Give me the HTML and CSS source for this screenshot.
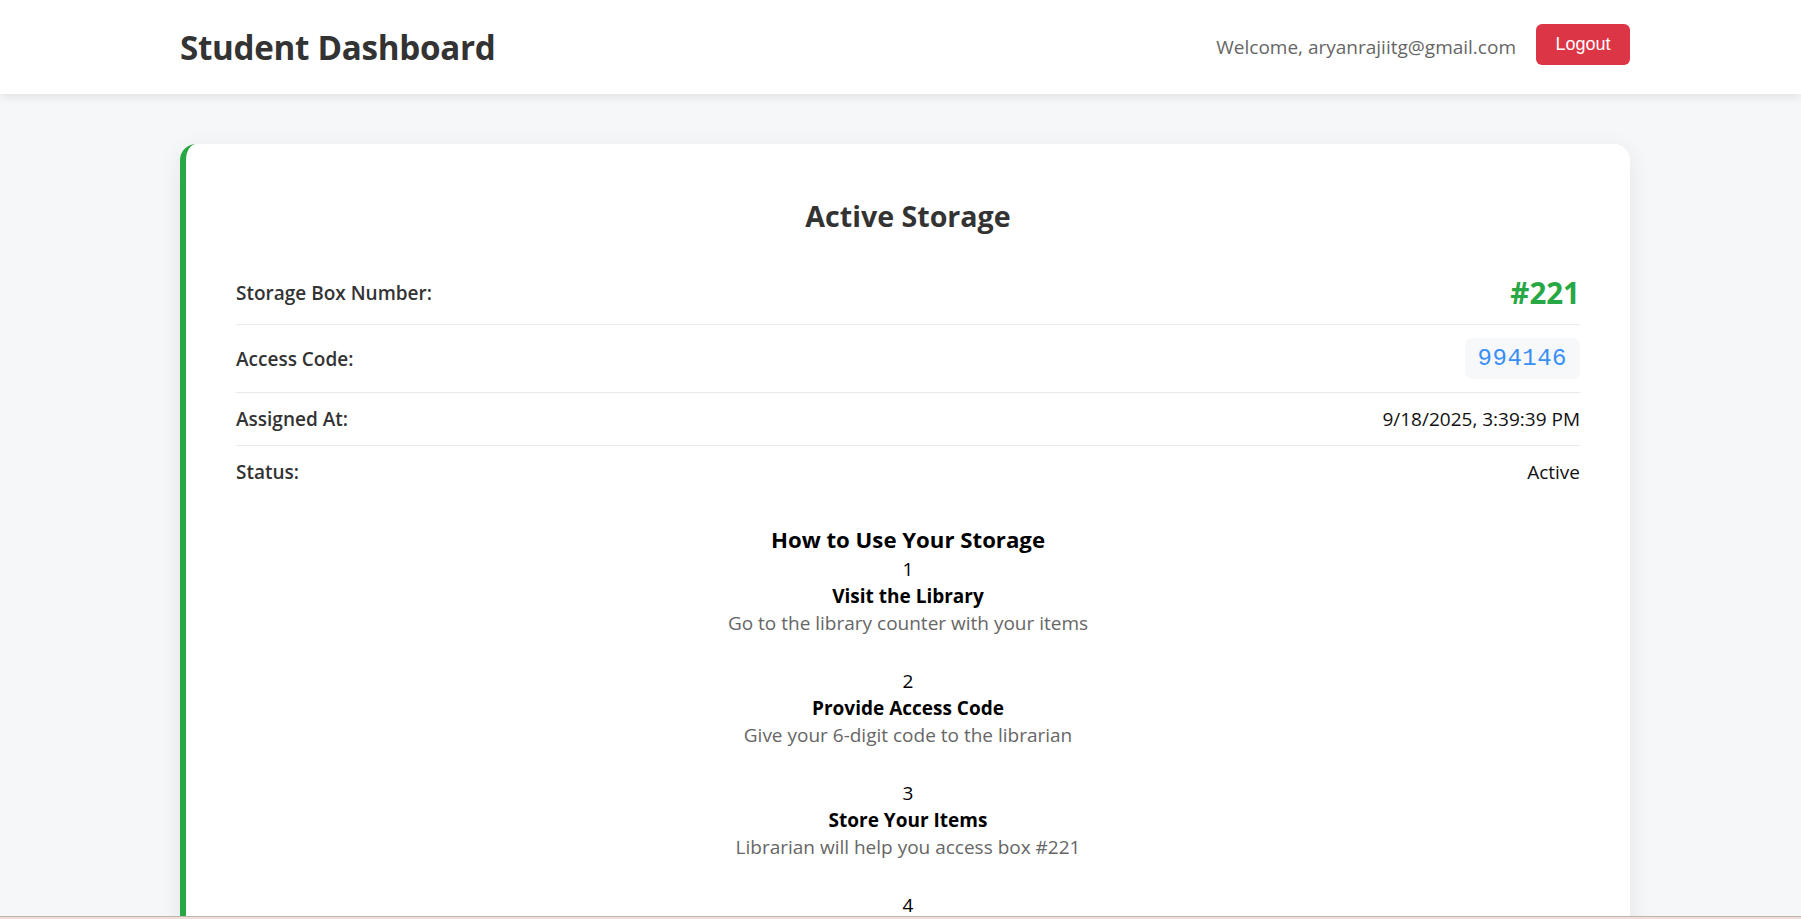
FILE: index.html
```html
<!DOCTYPE html>
<html lang="en">
<head>
<meta charset="utf-8">
<title>Student Dashboard</title>
<link rel="stylesheet" href="styles.css">
</head>
<body>
<header class="topbar">
  <div class="wrap topbar-inner">
    <h1 class="brand">Student Dashboard</h1>
    <div class="user">
      <span class="welcome">Welcome, aryanrajiitg@gmail.com</span>
      <button class="logout" type="button">Logout</button>
    </div>
  </div>
</header>
<main class="main">
  <div class="wrap">
    <section class="card">
      <h2 class="card-title">Active Storage</h2>
      <div class="rows">
        <div class="row">
          <span class="label">Storage Box Number:</span>
          <span class="box-number">#221</span>
        </div>
        <div class="row">
          <span class="label">Access Code:</span>
          <span class="code">994146</span>
        </div>
        <div class="row">
          <span class="label">Assigned At:</span>
          <span class="value">9/18/2025, 3:39:39 PM</span>
        </div>
        <div class="row">
          <span class="label">Status:</span>
          <span class="value">Active</span>
        </div>
      </div>
      <div class="howto">
        <h3 class="howto-title">How to Use Your Storage</h3>
        <div class="step">
          <div class="step-num">1</div>
          <div class="step-title">Visit the Library</div>
          <div class="step-desc">Go to the library counter with your items</div>
        </div>
        <div class="step">
          <div class="step-num">2</div>
          <div class="step-title">Provide Access Code</div>
          <div class="step-desc">Give your 6-digit code to the librarian</div>
        </div>
        <div class="step">
          <div class="step-num">3</div>
          <div class="step-title">Store Your Items</div>
          <div class="step-desc">Librarian will help you access box #221</div>
        </div>
        <div class="step">
          <div class="step-num">4</div>
          <div class="step-title">Retrieve Anytime</div>
          <div class="step-desc">Use the same code to collect your items</div>
        </div>
      </div>
    </section>
  </div>
</main>
<div class="edge"></div>
</body>
</html>
```
FILE: styles.css
```css
* { box-sizing: border-box; }
html, body { margin: 0; padding: 0; }
body {
  background: #f6f7f9;
  font-family: "Open Sans", "Noto Sans", sans-serif;
  color: #333;
  font-size: 19px;
}
.wrap {
  width: 1450px;
  margin-left: 180px;
}
.topbar {
  background: #fff;
  height: 94px;
  box-shadow: 0 2px 10px rgba(0, 0, 0, 0.1);
  position: relative;
  z-index: 1;
}
.topbar-inner {
  height: 94px;
  display: flex;
  align-items: center;
  justify-content: space-between;
}
.brand {
  margin: 0;
  font-size: 33.2px;
  font-weight: 700;
  color: #333;
  letter-spacing: -0.3px;
}
.user {
  display: flex;
  align-items: center;
  gap: 20px;
}
.welcome {
  color: #666;
  font-size: 19px;
}
.logout {
  background: #dc3545;
  color: #fff;
  border: none;
  border-radius: 6px;
  width: 94px;
  height: 41px;
  font-family: "Liberation Sans", Arial, sans-serif;
  font-size: 18px;
  padding: 0;
  margin-top: -6px;
}
.main {
  padding-top: 50px;
}
.card {
  background: #fff;
  border-left: 6px solid #28a745;
  border-radius: 16px;
  box-shadow: 0 6px 24px rgba(0, 0, 0, 0.08);
  padding: 52px 50px 60px 50px;
  min-height: 900px;
}
.card-title {
  margin: 0 0 26px;
  text-align: center;
  font-size: 28.6px;
  font-weight: 700;
  color: #333;
  line-height: 40px;
}
.row {
  display: flex;
  justify-content: space-between;
  align-items: center;
  padding: 13px 0;
  border-bottom: 1px solid #e9e9e9;
  line-height: 26px;
}
.row:last-child { border-bottom: none; }
.label {
  font-weight: 600;
  color: #333;
}
.value { color: #111; }
.box-number {
  color: #28a745;
  font-weight: 700;
  font-size: 29.5px;
  line-height: 36px;
}
.code {
  font-family: "Liberation Mono", "Courier New", monospace;
  color: #3a8ff7;
  background: #f7f8fa;
  border-radius: 7px;
  padding: 0 13px;
  height: 41px;
  line-height: 41px;
  font-size: 24px;
  letter-spacing: 0.5px;
}
.howto {
  margin-top: 26px;
  text-align: center;
  color: #000;
}
.howto-title {
  margin: 0;
  font-size: 22.2px;
  font-weight: 700;
  line-height: 32px;
}
.step {
  line-height: 27px;
  margin-bottom: 31px;
}
.step-num { font-weight: 400; }
.step-title { font-weight: 700; }
.step-desc { color: #666; }
.edge {
  position: fixed;
  left: 0;
  right: 0;
  bottom: 0;
  height: 3px;
  border-top: 1px solid #bfb6b3;
  background: #f1dcd8;
  z-index: 5;
}
```
